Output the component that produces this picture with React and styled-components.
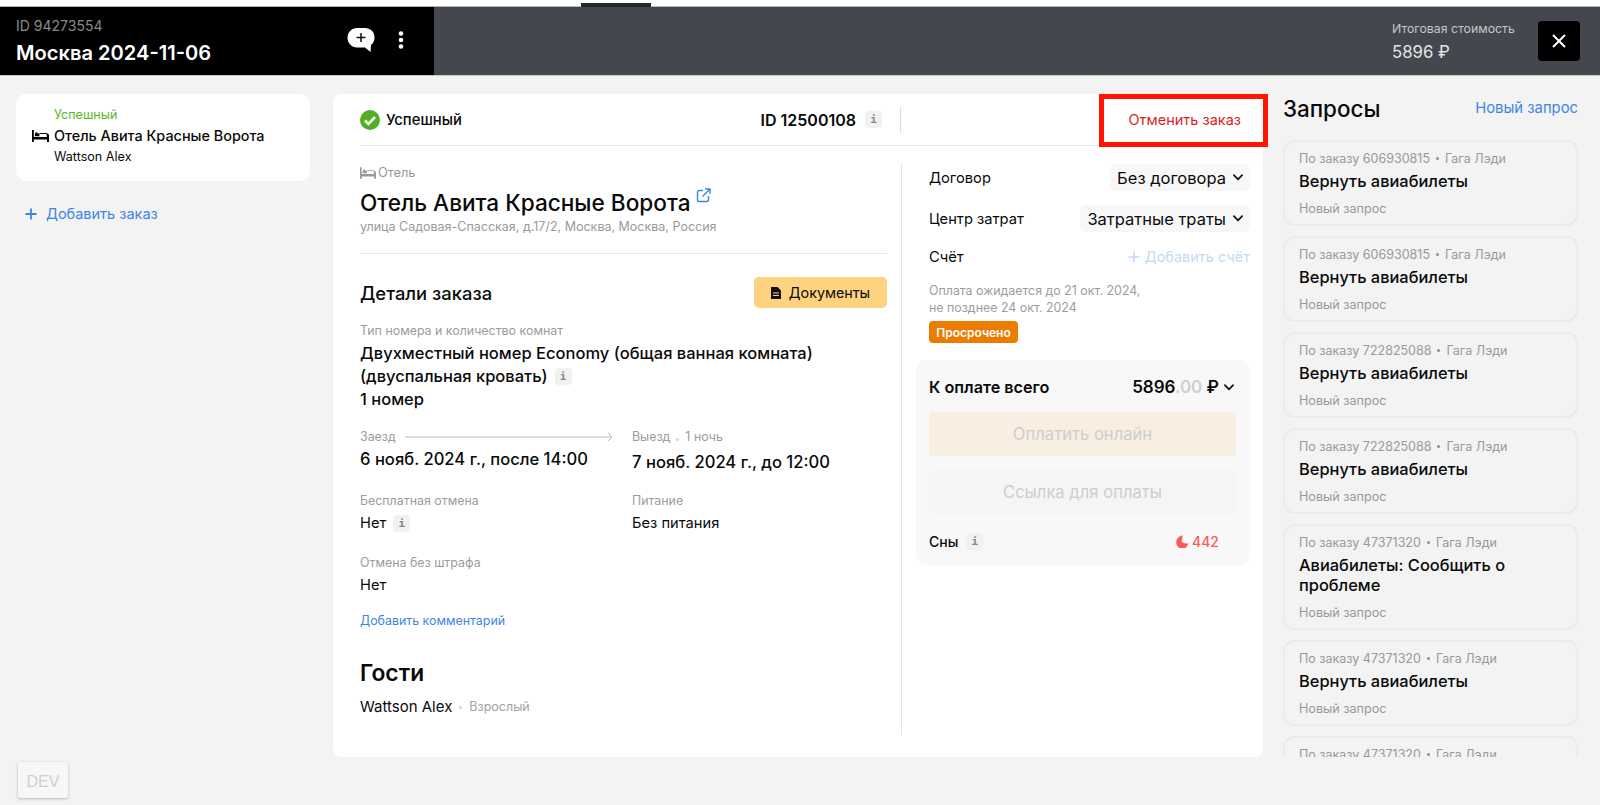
import React from "react";
import styled, { createGlobalStyle } from "styled-components";

const Global = createGlobalStyle`
  html, body { margin: 0; padding: 0; height: 805px; overflow: hidden; background: #f3f3f3; }
  * { box-sizing: border-box; }
  body { font-family: Inter, "Noto Sans", "Liberation Sans", sans-serif; color: #0a0a0a; }
`;

const Page = styled.div`width: 1600px; height: 805px; display: flex; flex-direction: column; overflow: hidden;`;
const TopStrip = styled.div`height: 7px; background: #fff; border-bottom: 1px solid #b5b5b5; display: flex; align-items: flex-end; flex: none;`;
const TopTab = styled.div`width: 70px; height: 4px; margin-left: 581px; background: #25262a; margin-bottom: -1px;`;
const Header = styled.header`height: 69px; flex: none; display: grid; grid-template-columns: 434px 1fr; background: #44474e; border-bottom: 1px solid #c9c9c9;`;
const TripBlock = styled.div`background: #000; display: flex; align-items: flex-start; justify-content: space-between; padding: 10px 30px 0 16px;`;
const TripInfo = styled.div`display: flex; flex-direction: column;`;
const TripId = styled.div`font-size: 14px; line-height: 18px; color: #8a8a8a;`;
const TripName = styled.div`font-size: 20.1px; line-height: 30px; margin-top: 3px; font-weight: 600; color: #fff; white-space: nowrap;`;
const TripTools = styled.div`display: flex; align-items: center; gap: 23px; margin-top: 10px;`;
const CostBlock = styled.div`display: flex; justify-content: flex-end; align-items: flex-start; padding: 14px 20px 0 0;`;
const CostInfo = styled.div`display: flex; flex-direction: column; margin-right: 22px; width: 124px;`;
const CostLabel = styled.div`font-size: 12.3px; line-height: 16px; color: #c6c6c8; white-space: nowrap;`;
const CostValue = styled.div`font-size: 16.8px; line-height: 22px; margin-top: 4px; color: #e4e4e4;`;
const CloseButton = styled.button`width: 42px; height: 40px; background: #000; border: 0; border-radius: 4px; display: flex; align-items: center; justify-content: center; padding: 0;`;

const Body = styled.main`flex: 1; display: flex; padding: 18px 21px 0 16px; gap: 0; min-height: 0; align-items: flex-start;`;
const LeftColumn = styled.aside`width: 294px; flex: none; margin-right: 23px;`;
const OrderCard = styled.div`height: 87px; background: #fff; border-radius: 10px; padding: 10px 0 0 16px; display: grid; grid-template-columns: 16px 1fr; column-gap: 6px; grid-auto-rows: 21px; align-items: center;`;
const OrderStatus = styled.div`grid-column: 2; font-size: 12.6px; color: #56b825;`;
const OrderName = styled.div`grid-column: 2; font-size: 14.4px; font-weight: 500; white-space: nowrap;`;
const OrderGuest = styled.div`grid-column: 2; font-size: 12.6px;`;
const AddOrder = styled.div`display: flex; align-items: center; gap: 9px; margin: 22px 0 0 9px; color: #3d86e6; font-size: 14.5px; line-height: 22px;`;
const DevBadge = styled.div`position: absolute; left: 18px; top: 762px; width: 50px; height: 36px; padding-top: 3px; background: #f7f7f7; border-radius: 2px; box-shadow: 0 1px 3px rgba(0,0,0,.25); color: #cfcfcf; font: 16px "Liberation Sans", sans-serif; display: flex; align-items: center; justify-content: center;`;

const MainCard = styled.section`position: relative; width: 930px; height: 663px; flex: none; margin-right: 20px; background: #fff; border-radius: 8px; padding: 0 13px 22px 27px; display: flex; flex-direction: column;`;
const CardTop = styled.div`height: 52px; flex: none; display: flex; align-items: center; border-bottom: 1px solid #ececec; margin-right: -13px;`;
const Status = styled.div`display: flex; align-items: center; gap: 6px; font-size: 14.8px; font-weight: 500; width: 400px;`;
const OrderId = styled.div`display: flex; align-items: center; gap: 9px; font-size: 16px; font-weight: 600; width: 141px; justify-content: flex-end; padding-right: 18px; height: 26px; border-right: 1px solid #dedede; white-space: nowrap;`;
const CancelText = styled.div`margin-left: auto; margin-right: 22px; color: #d81f1f; font-size: 14.5px;`;
const RedFrame = styled.div`position: absolute; left: 766px; top: 0; width: 169px; height: 53px; border: 5px solid #ff1500; pointer-events: none;`;
const Columns = styled.div`flex: 1; display: grid; grid-template-columns: 527px 1fr; column-gap: 14px; padding-top: 17px; min-height: 0;`;
const Details = styled.div`display: flex; flex-direction: column;`;
const Overline = styled.div`display: flex; align-items: center; gap: 2px; font-size: 12.8px; line-height: 20px; color: #999;`;
const HotelTitle = styled.h1`margin: 5px 0 0; font-size: 22.6px; line-height: 30px; font-weight: 500; display: flex; align-items: flex-start; gap: 5px; white-space: nowrap;`;
const Address = styled.div`font-size: 12.5px; line-height: 18px; color: #9a9a9a; white-space: nowrap;`;
const Rule = styled.hr`width: 100%; margin: 17px 0 0; border: 0; border-top: 1px solid #e6e6e6;`;
const SectionRow = styled.div`display: flex; align-items: center; justify-content: space-between; margin-top: 23px;`;
const SectionTitle = styled.h2`margin: 0; font-size: 18.4px; font-weight: 500;`;
const DocButton = styled.button`width: 133px; height: 31px; background: #ffd27f; border: 0; border-radius: 5px; font: 400 14.3px Inter, sans-serif; color: #0a0a0a; display: flex; align-items: center; justify-content: center; gap: 8px; padding: 0;`;
const FieldLabel = styled.div`font-size: 12.4px; line-height: 16px; color: #9c9c9c; white-space: nowrap; display: flex; align-items: center; margin-top: ${p => p.$top || 0}px;`;
const RoomName = styled.div`margin-top: 3px; font-size: 16.5px; line-height: 23px; font-weight: 500;`;
const InfoMark = styled.span`display: inline-flex; align-items: center; justify-content: center; width: 17px; height: 17px; border-radius: 4px; background: #f1f1f1; color: #888; font: 700 11px "DejaVu Sans Mono", monospace; margin-left: ${p => p.$left ?? 7}px; vertical-align: 2px; flex: none;`;
const StayGrid = styled.div`display: grid; grid-template-columns: 272px 1fr; row-gap: 19px; margin-top: 18px;`;
const Field = styled.div`display: flex; flex-direction: column;`;
const ArrowLine = styled.span`display: flex; flex: none; margin-left: 9px;`;
const Dot = styled.span`width: 3px; height: 3px; border-radius: 50%; background: #d6d6d6; margin: ${p => p.$wide ? "0 7px" : "4px 6px 0"};`;
const DateValue = styled.div`margin-top: ${p => p.$top}px; font-size: 16.6px; line-height: 24px; font-weight: 500; white-space: nowrap;`;
const PlainValue = styled.div`margin-top: 3px; font-size: 14.7px; line-height: 22px; display: flex; align-items: center;`;
const CommentLink = styled.div`margin-top: 16px; font-size: 12.4px; line-height: 18px; color: #3d86e6;`;
const GuestsTitle = styled.h2`margin: 27px 0 0; font-size: 22.8px; line-height: 32px; font-weight: 600;`;
const GuestRow = styled.div`margin-top: 8px; display: flex; align-items: center; font-size: 15px; line-height: 20px;`;
const GuestKind = styled.span`font-size: 12.5px; color: #a2a2a2;`;

const PayColumn = styled.div`border-left: 1px solid #e4e4e4; padding-left: 27px; display: flex; flex-direction: column; min-width: 0; height: 572px;`;
const SettingRow = styled.div`display: flex; align-items: center; justify-content: space-between; margin-top: ${p => p.$top}px; font-size: 14.7px;`;
const Select = styled.div`height: 27px; background: #f7f7f7; border-radius: 5px; display: flex; align-items: center; gap: 7px; padding: 0 7px 0 7px; font-size: 16.5px; white-space: nowrap;`;
const AddInvoice = styled.div`display: flex; align-items: center; gap: 5px; color: #c4d9f6; font-size: 14.5px; line-height: 20px;`;
const PayNote = styled.div`margin-top: 16px; font-size: 12.4px; line-height: 16.5px; color: #9c9c9c;`;
const Overdue = styled.div`align-self: flex-start; margin-top: 5px; width: 89px; height: 22px; border-radius: 4px; background: #ec7c00; color: #fff; font-size: 12px; font-weight: 600; display: flex; align-items: center; justify-content: center;`;
const PayPanel = styled.div`margin: 17px 0 0 -13px; height: 205px; background: #f8f8f8; border-radius: 10px; padding: 14px 14px 13px 13px; display: flex; flex-direction: column;`;
const TotalRow = styled.div`height: 26px; flex: none; display: flex; align-items: center; justify-content: space-between; font-size: 16.2px; font-weight: 600;`;
const TotalSum = styled.div`display: flex; align-items: center; gap: 5px; font-size: 17px; font-weight: 600; margin-right: 2px;`;
const Cents = styled.span`color: #cfcfcf;`;
const PayButton = styled.button`height: 44px; flex: none; margin-top: ${p => p.$top}px; border: 0; border-radius: 4px; background: ${p => p.$bg}; color: #cdcdcd; font: 400 16.6px Inter, sans-serif; padding: 0;`;
const DreamRow = styled.div`height: 24px; flex: none; margin-top: 15px; display: flex; align-items: center; font-size: 14px; font-weight: 500;`;
const DreamPoints = styled.div`margin-left: auto; margin-right: 17px; display: flex; align-items: center; gap: 3px; color: #ff5a5a; font-size: 14px; font-weight: 500;`;

const RightColumn = styled.aside`width: 295px; flex: none; height: 663px; display: flex; flex-direction: column;`;
const RequestsHead = styled.div`height: 28px; flex: none; display: flex; align-items: center; justify-content: space-between; margin-bottom: 18px;`;
const RequestsTitle = styled.h2`margin: 0; font-size: 22.4px; font-weight: 500;`;
const NewRequest = styled.div`font-size: 14.8px; color: #3d86e6;`;
const RequestList = styled.div`flex: 1; min-height: 0; overflow: hidden; display: flex; flex-direction: column; gap: 10px;`;
const RequestCard = styled.div`flex: none; border: 2px solid #ebebeb; border-radius: 11px; padding: 8px 14px 7px;`;
const RequestMeta = styled.div`font-size: 12.5px; line-height: 17px; color: #999; display: flex; align-items: center; white-space: nowrap;`;
const MetaDot = styled.span`width: 3px; height: 3px; border-radius: 50%; background: #8f8f8f; margin: 0 6px;`;
const RequestTitle = styled.div`margin-top: 4px; font-size: 16.4px; line-height: 20px; font-weight: 500;`;
const RequestState = styled.div`margin-top: 9px; font-size: 12.6px; line-height: 17px; color: #999;`;

const Bed = ({ color = "#000", w = 17 }) => (
  <svg width={w} height="12" viewBox="0 0 17 12" fill="none">
    <path d="M0 0h1.800v7h13V5.200c0-.7-.5-1.200-1.200-1.200H7.400v2.200H2.800V4.600c0-.6.5-1 1-1h3.600C7.600 3.200 8 3 8.400 3h5.400c1.700 0 3.200 1 3.200 2.700V12h-2V9.600H1.800V12H0z" fill={color} />
    <circle cx="4.400" cy="3.400" r="1.200" fill={color} />
  </svg>
);
const Chevron = ({ color = "#111" }) => (
  <svg width="10" height="7" viewBox="0 0 11 7" fill="none"><path d="M1 1l4.500 4.500L10 1" stroke={color} strokeWidth="1.900" strokeLinecap="round" strokeLinejoin="round" /></svg>
);
const Plus = ({ size = 12, color = "#3d86e6", sw = 1.6 }) => (
  <svg width={size} height={size} viewBox="0 0 12 12" fill="none"><path d="M6 0.500v11M0.500 6h11" stroke={color} strokeWidth={sw} /></svg>
);
const Info = (p) => <InfoMark {...p}>i</InfoMark>;

const requests = [
  ["606930815", "Вернуть авиабилеты", "Гага Лэди"],
  ["606930815", "Вернуть авиабилеты", "Гага Лэди"],
  ["722825088", "Вернуть авиабилеты", "Гага Лэди"],
  ["722825088", "Вернуть авиабилеты", "Гага Лэди"],
  ["47371320", "Авиабилеты: Сообщить о проблеме", "Гага Лэди"],
  ["47371320", "Вернуть авиабилеты", "Гага Лэди"],
  ["47371320", "Вернуть авиабилеты", "Гага Лэди"],
];

export default function App() {
  return (
    <Page>
      <Global />
      <TopStrip><TopTab /></TopStrip>
      <Header>
        <TripBlock>
          <TripInfo>
            <TripId>ID 94273554</TripId>
            <TripName>Москва 2024-11-06</TripName>
          </TripInfo>
          <TripTools>
            <svg width="28" height="26" viewBox="0 0 28 26">
              <path d="M10 1h8c5 0 9.500 3.500 9.500 9.500 0 3.500-1.500 6-3.500 7.500l-.5 7-5.500-4.500h-8C4.500 20.500.5 16 .5 10.500.5 5 5 1 10 1z" fill="#fff" />
              <path d="M14 6v9M9.500 10.500h9" stroke="#111" strokeWidth="1.500" />
            </svg>
            <svg width="6" height="18" viewBox="0 0 6 18" fill="#fff"><circle cx="3" cy="2.500" r="2.300" /><circle cx="3" cy="9" r="2.300" /><circle cx="3" cy="15.500" r="2.300" /></svg>
          </TripTools>
        </TripBlock>
        <CostBlock>
          <CostInfo>
            <CostLabel>Итоговая стоимость</CostLabel>
            <CostValue>5896 ₽</CostValue>
          </CostInfo>
          <CloseButton aria-label="Закрыть">
            <svg width="14" height="14" viewBox="0 0 14 14"><path d="M1 1l12 12M13 1L1 13" stroke="#fff" strokeWidth="2" /></svg>
          </CloseButton>
        </CostBlock>
      </Header>
      <Body>
        <LeftColumn>
          <OrderCard>
            <OrderStatus>Успешный</OrderStatus>
            <Bed />
            <OrderName>Отель Авита Красные Ворота</OrderName>
            <OrderGuest>Wattson Alex</OrderGuest>
          </OrderCard>
          <AddOrder><Plus size={12} sw={1.8} />Добавить заказ</AddOrder>
        </LeftColumn>
        <MainCard>
          <CardTop>
            <Status>
              <svg width="20" height="20" viewBox="0 0 20 20"><circle cx="10" cy="10" r="10" fill="#4fb022" /><path d="M5 10.500l3.500 3.500 6.500-7" fill="none" stroke="#fff" strokeWidth="2.600" /></svg>
              Успешный
            </Status>
            <OrderId>ID 12500108<Info $left={0} /></OrderId>
            <CancelText>Отменить заказ</CancelText>
          </CardTop>
          <RedFrame />
          <Columns>
            <Details>
              <Overline><Bed color="#9a9a9a" w={16} />Отель</Overline>
              <HotelTitle>
                Отель Авита Красные Ворота
                <svg width="15" height="15" viewBox="0 0 15 15" fill="none">
                  <path d="M7 2.500H3A1.500 1.500 0 0 0 1.500 4v8A1.500 1.500 0 0 0 3 13.500h8a1.500 1.500 0 0 0 1.500-1.500V8M9 1h5v5M14 1L6.500 8.500" stroke="#3d86e6" strokeWidth="1.400" />
                </svg>
              </HotelTitle>
              <Address>улица Садовая-Спасская, д.17/2, Москва, Москва, Россия</Address>
              <Rule />
              <SectionRow>
                <SectionTitle>Детали заказа</SectionTitle>
                <DocButton>
                  <svg width="10" height="12" viewBox="0 0 10 12"><path d="M0 0h6.500L10 3.500V12H0z" fill="#111" /><path d="M2 6h6M2 8.500h6" stroke="#ffd27f" /></svg>
                  Документы
                </DocButton>
              </SectionRow>
              <FieldLabel $top={15}>Тип номера и количество комнат</FieldLabel>
              <RoomName>
                Двухместный номер Economy (общая ванная комната)<br />
                (двуспальная кровать)<Info $left={7} /><br />
                1 номер
              </RoomName>
              <StayGrid>
                <Field>
                  <FieldLabel>
                    Заезд
                    <ArrowLine>
                      <svg width="209" height="10" viewBox="0 0 209 10" fill="none"><path d="M0 5h207M203 1l4 4-4 4" stroke="#bdbdbd" strokeWidth="1" /></svg>
                    </ArrowLine>
                  </FieldLabel>
                  <DateValue $top={2}>6 нояб. 2024 г., после 14:00</DateValue>
                </Field>
                <Field>
                  <FieldLabel>Выезд<Dot />1 ночь</FieldLabel>
                  <DateValue $top={5}>7 нояб. 2024 г., до 12:00</DateValue>
                </Field>
                <Field>
                  <FieldLabel>Бесплатная отмена</FieldLabel>
                  <PlainValue>Нет<Info $left={7} /></PlainValue>
                </Field>
                <Field>
                  <FieldLabel>Питание</FieldLabel>
                  <PlainValue>Без питания</PlainValue>
                </Field>
              </StayGrid>
              <FieldLabel $top={21}>Отмена без штрафа</FieldLabel>
              <PlainValue>Нет</PlainValue>
              <CommentLink>Добавить комментарий</CommentLink>
              <GuestsTitle>Гости</GuestsTitle>
              <GuestRow>Wattson Alex<Dot $wide /><GuestKind>Взрослый</GuestKind></GuestRow>
            </Details>
            <PayColumn>
              <SettingRow $top={1}>Договор<Select>Без договора<Chevron /></Select></SettingRow>
              <SettingRow $top={14}>Центр затрат<Select>Затратные траты<Chevron /></Select></SettingRow>
              <SettingRow $top={15}>Счёт<AddInvoice><Plus size={12} color="#c4d9f6" />Добавить счёт</AddInvoice></SettingRow>
              <PayNote>Оплата ожидается до 21 окт. 2024,<br />не позднее 24 окт. 2024</PayNote>
              <Overdue>Просрочено</Overdue>
              <PayPanel>
                <TotalRow>
                  К оплате всего
                  <TotalSum><span>5896<Cents>.00</Cents> ₽</span><Chevron /></TotalSum>
                </TotalRow>
                <PayButton $top={12} $bg="#f8efe2">Оплатить онлайн</PayButton>
                <PayButton $top={14} $bg="#f5f5f5">Ссылка для оплаты</PayButton>
                <DreamRow>
                  Сны<Info $left={8} />
                  <DreamPoints>
                    <svg width="13" height="13" viewBox="0 0 13 13"><path d="M6.500.3C3 1.300.3 3.800.3 7.200a6 6 0 0 0 12 .9c.2-.3-1.300.6-2.500.4C8.600 8.300 7 7.600 5.500 6.400 6.200 4.800 6.700 2.500 6.500.3z" fill="#ff5a5a" /></svg>
                    442
                  </DreamPoints>
                </DreamRow>
              </PayPanel>
            </PayColumn>
          </Columns>
        </MainCard>
        <RightColumn>
          <RequestsHead>
            <RequestsTitle>Запросы</RequestsTitle>
            <NewRequest>Новый запрос</NewRequest>
          </RequestsHead>
          <RequestList>
            {requests.map(([id, title, who], i) => (
              <RequestCard key={i}>
                <RequestMeta>По заказу {id}<MetaDot />{who}</RequestMeta>
                <RequestTitle>{title}</RequestTitle>
                <RequestState>Новый запрос</RequestState>
              </RequestCard>
            ))}
          </RequestList>
        </RightColumn>
      </Body>
      <DevBadge>DEV</DevBadge>
    </Page>
  );
}
